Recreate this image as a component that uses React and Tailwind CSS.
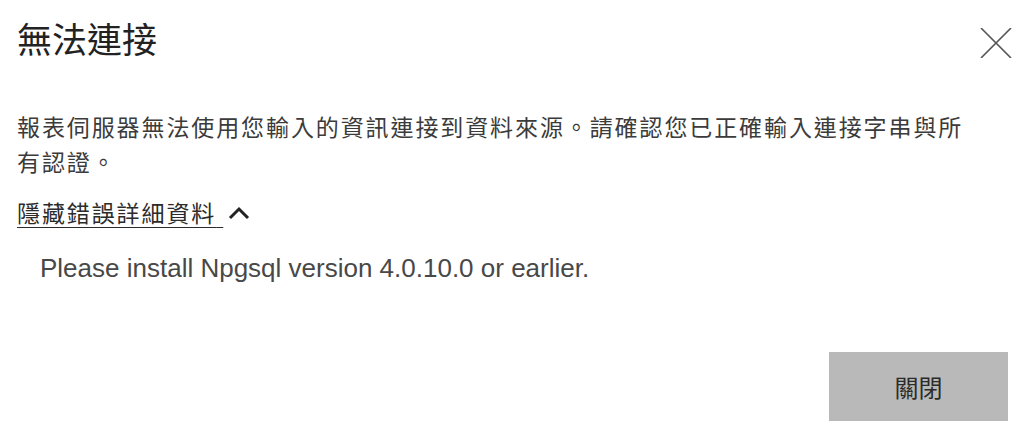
import React from 'react';

const cjk = { fontFamily: '"Noto Sans CJK TC", "Noto Sans", sans-serif' };

const App = () => {
  return (
    <div lang="zh-TW" className="w-[1036px] h-[433px] bg-white flex flex-col overflow-hidden" style={cjk}>
      {/* header */}
      <div className="flex items-start justify-between pl-[17px] pr-[24px] pt-[18px]">
        <h1 className="text-[35px] leading-[40px] text-[#222] font-normal">無法連接</h1>
        <button className="mt-[10px] text-[#555]">
          <svg width="32" height="30" viewBox="0 0 32 30">
            <path d="M1 0 L31 30 M31 0 L1 30" stroke="currentColor" strokeWidth="1.6" fill="none" />
          </svg>
        </button>
      </div>

      {/* body */}
      <div className="pl-[17px] mt-[51px]">
        <p className="w-[960px] text-[23px] leading-[35px] tracking-[1.9px] text-[#3b3b3b]">
          報表伺服器無法使用您輸入的資訊連接到資料來源。請確認您已正確輸入連接字串與所有認證。
        </p>

        <div className="mt-[16px] flex items-center">
          <a className="text-[23px] leading-[35px] tracking-[1.9px] text-[#2b2b2b] underline underline-offset-[5px] decoration-1">
            隱藏錯誤詳細資料{'\u00a0'}
          </a>
          <svg className="ml-[4px]" width="24" height="14" viewBox="0 0 24 14">
            <path d="M3 12 L12 3 L21 12" stroke="#222" strokeWidth="3" fill="none" />
          </svg>
        </div>

        <div
          className="mt-[23px] pl-[23px] text-[26px] leading-[30px] text-[#484848]"
          style={{ fontFamily: '"Liberation Sans", Arial, sans-serif' }}
        >
          Please install Npgsql version 4.0.10.0 or earlier.
        </div>
      </div>

      {/* footer */}
      <div className="flex justify-end pr-[28px] mt-[69px]">
        <button className="w-[179px] h-[69px] bg-[#b9b9b9] text-[24px] text-[#2b2b2b]">關閉</button>
      </div>
    </div>
  );
};

export default App;
